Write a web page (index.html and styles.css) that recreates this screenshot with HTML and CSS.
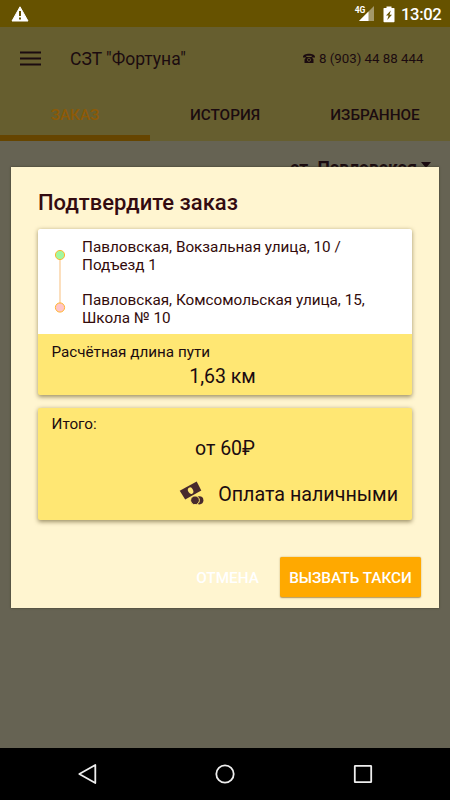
FILE: index.html
```html
<!DOCTYPE html>
<html lang="ru">
<head>
<meta charset="utf-8">
<meta name="viewport" content="width=device-width">
<title>Фортуна</title>
<link rel="stylesheet" href="styles.css">
</head>
<body>
<div class="screen">
  <header class="status">
    <svg class="warning" width="18" height="16" viewBox="0 0 18 16"><path d="M9 .8 17 15H1z" fill="#fff" stroke="#fff" stroke-linejoin="round"/><path d="M9 5v5M9 11.4v2" stroke="#665200" stroke-width="2"/></svg>
    <span class="network">4G</span>
    <svg class="signal" width="16" height="16" viewBox="0 0 16 16"><path d="M15 0v15H0z" fill="#a3986a"/><path d="M9.5 5.5V15H0z" fill="#fff"/></svg>
    <svg class="battery" width="12" height="17" viewBox="0 0 12 17"><path d="M3.5 2V.5h5V2H11q.5 0 .5.7v12.8q0 .7-.7.7H1.2q-.7 0-.7-.7V2.7Q.5 2 1 2z" fill="#fff"/><path d="M7.8 4.5 3 9.4h2.6L4.2 14 9 8.7H6.5z" fill="#665200"/></svg>
    <time class="clock">13:02</time>
  </header>
  <div class="toolbar">
    <svg class="menu" width="21" height="16" viewBox="0 0 21 16"><path d="M0 1.5h21M0 7.5h21M0 13.5h21" stroke="#1b0b10" stroke-width="2"/></svg>
    <h1 class="brand">СЗТ "Фортуна"</h1>
    <span class="phone"><svg width="12" height="11" viewBox="0 0 12 11"><path d="M0 3.8C0-.4 12-.4 12 3.8v.7H8.7V2.8H3.3v1.7H0zM3.5 4h5l2 2.5V10h-9V6.5z" fill="#1b0b10"/><circle cx="6" cy="6.8" r="1.6" fill="none" stroke="#665e2f" stroke-width=".8"/></svg><span class="number">8 (903) 44 88 444</span></span>
  </div>
  <nav class="tabs">
    <span class="tab active">ЗАКАЗ</span>
    <span class="tab">ИСТОРИЯ</span>
    <span class="tab">ИЗБРАННОЕ</span>
  </nav>
  <main class="content">
    <div class="city"><span class="place">ст. Павловская</span><svg width="10" height="6" viewBox="0 0 10 6"><path d="M0 0h10L5 6z" fill="#1b0b10"/></svg></div>
  </main>
  <footer class="navbar">
    <svg width="22" height="22" viewBox="0 0 22 22"><path d="M18.3 2v18L2.3 11z"/></svg>
    <svg width="22" height="22" viewBox="0 0 22 22"><circle cx="11" cy="11" r="8.7"/></svg>
    <svg width="22" height="22" viewBox="0 0 22 22"><rect x="2.8" y="2.8" width="16.4" height="16.4" rx=".5"/></svg>
  </footer>

  <section class="dialog">
    <h2 class="title">Подтвердите заказ</h2>
    <div class="card route-card">
      <div class="route">
        <svg class="track" width="12" height="64" viewBox="0 0 12 64"><path d="M6 6v52" stroke="#fbd7ae" stroke-width="1.6"/><circle cx="6" cy="6" r="4.6" fill="#a2f7a0" stroke="#ffb42c"/><circle cx="6" cy="58.5" r="4.6" fill="#ffc5c9" stroke="#ffb42c"/></svg>
        <div class="stops">
          <p class="stop"><span class="from">Павловская, Вокзальная улица, 10 /</span><br><span class="entrance">Подъезд 1</span></p>
          <p class="stop"><span class="to">Павловская, Комсомольская улица, 15,</span><br><span class="school">Школа № 10</span></p>
        </div>
      </div>
      <div class="summary">
        <div class="label"><span class="length">Расчётная длина пути</span></div>
        <div class="value"><span class="km">1,63 км</span></div>
      </div>
    </div>
    <div class="card total-card">
      <div class="label"><span class="total">Итого:</span></div>
      <div class="value"><span class="price">от 60₽</span></div>
      <div class="payment">
        <svg width="26" height="26" viewBox="0 0 26 26"><path d="M.7 10.8 17.7 1.5l4.6 9L6.2 19.6z" fill="#482a2d"/><ellipse cx="11.6" cy="10.7" rx="2.5" ry="3.4" transform="rotate(-28 11.6 10.7)" fill="#ffe773"/><circle cx="20.3" cy="20.3" r="4.1" fill="#482a2d"/><circle cx="16" cy="20.3" r="4.4" fill="#482a2d" stroke="#ffe773"/></svg>
        <span class="cash">Оплата наличными</span>
      </div>
    </div>
    <div class="actions">
      <button class="cancel"><span>ОТМЕНА</span></button>
      <button class="call"><span>ВЫЗВАТЬ ТАКСИ</span></button>
    </div>
  </section>
</div>
</body>
</html>
```
FILE: styles.css
```css
* { box-sizing: border-box; }
body { margin: 0; font-family: Roboto, sans-serif; color: #1b0b10; }
h1, h2, p { margin: 0; font-weight: 400; }
svg { display: block; flex: none; }
span { white-space: nowrap; }

.screen { position: relative; width: 450px; height: 800px; display: flex; flex-direction: column; overflow: hidden; background: #666353; }

.status { height: 27px; flex: none; display: flex; align-items: flex-start; padding: 6px 8.5px 0 11px; background: #665200; color: #fff; }
.network { margin-left: auto; font-size: 8.5px; line-height: 8px; font-weight: 700; margin-right: -6px; letter-spacing: -.3px; }
.battery { margin: 0 6px 0 8px; }
.clock { font-size: 16.6px; line-height: 17px; font-weight: 500; letter-spacing: -.3px; }

.toolbar { height: 63px; flex: none; display: flex; align-items: center; padding: 0 26.5px 0 20px; background: #665e2f; }
.menu { margin-top: 1px; }
.brand { margin-left: 29px; font-size: 17.5px; line-height: 24px; }
.phone { margin-left: auto; display: flex; align-items: center; gap: 4px; font-size: 13.3px; }

.tabs { height: 51px; flex: none; display: grid; grid-template: 51px / repeat(3, 1fr); background: #665e2f; }
.tab { text-align: center; font-size: 15.3px; line-height: 51px; font-weight: 500; }
.active { color: #8e5a06; border-bottom: 6px solid #664500; }

.content { flex: 1; padding: 15.5px 19px 0 0; }
.city { display: flex; justify-content: flex-end; align-items: center; gap: 4px; font-size: 17.5px; line-height: 22px; font-weight: 700; }
.city svg { margin-top: -5px; }

.navbar { height: 52px; flex: none; display: flex; justify-content: space-between; align-items: center; padding: 0 76.5px; background: #000; }
.navbar svg { fill: none; stroke: #eee; stroke-width: 1.8; stroke-linejoin: round; }

.dialog { position: absolute; left: 11px; top: 166.5px; width: 427.5px; height: 441.5px; padding: 20.5px 26.5px 0 27px; background: #fff5d0; box-shadow: 0 0 2px #3b3827; }
.title { font-size: 22px; line-height: 31px; font-weight: 500; color: #330b10; }
.card { border-radius: 2px; background: #ffe773; box-shadow: 0 1.5px 4px rgba(80, 65, 20, .55); overflow: hidden; }
.route-card { margin-top: 11px; height: 166px; }
.route { height: 105px; background: #fff; display: flex; padding: 9px 16px 0; gap: 16px; color: #330b0b; }
.track { margin-top: 11px; }
.stop { font-size: 15.28px; line-height: 18px; }
.stop + .stop { margin-top: 17px; }
.summary { padding-top: 9px; }
.label { padding-left: 13.5px; font-size: 15.25px; line-height: 18px; }
.value { text-align: center; font-size: 19.5px; line-height: 28px; padding-right: 5px; }
.summary .value { margin-top: 2px; }
.total-card { margin-top: 12.5px; height: 112.5px; padding-top: 7.5px; }
.total-card .value { margin-top: 2px; padding-right: 0; }
.payment { display: flex; justify-content: flex-end; align-items: center; gap: 13px; padding: 0 14px 0 0; margin-top: 18.5px; font-size: 19.7px; line-height: 26px; }
.payment svg { margin-top: -3px; }
.actions { display: flex; justify-content: flex-end; margin: 37px -9px 0 0; gap: 11px; }
button { border: 0; padding: 1px 0 0; height: 40px; font: 500 15.3px Roboto, sans-serif; color: #fff; background: none; }
.cancel { width: 83px; }
.call { width: 141px; background: #ffa900; border-radius: 2px; box-shadow: 0 .5px 1.5px rgba(120, 80, 0, .6); }
```
